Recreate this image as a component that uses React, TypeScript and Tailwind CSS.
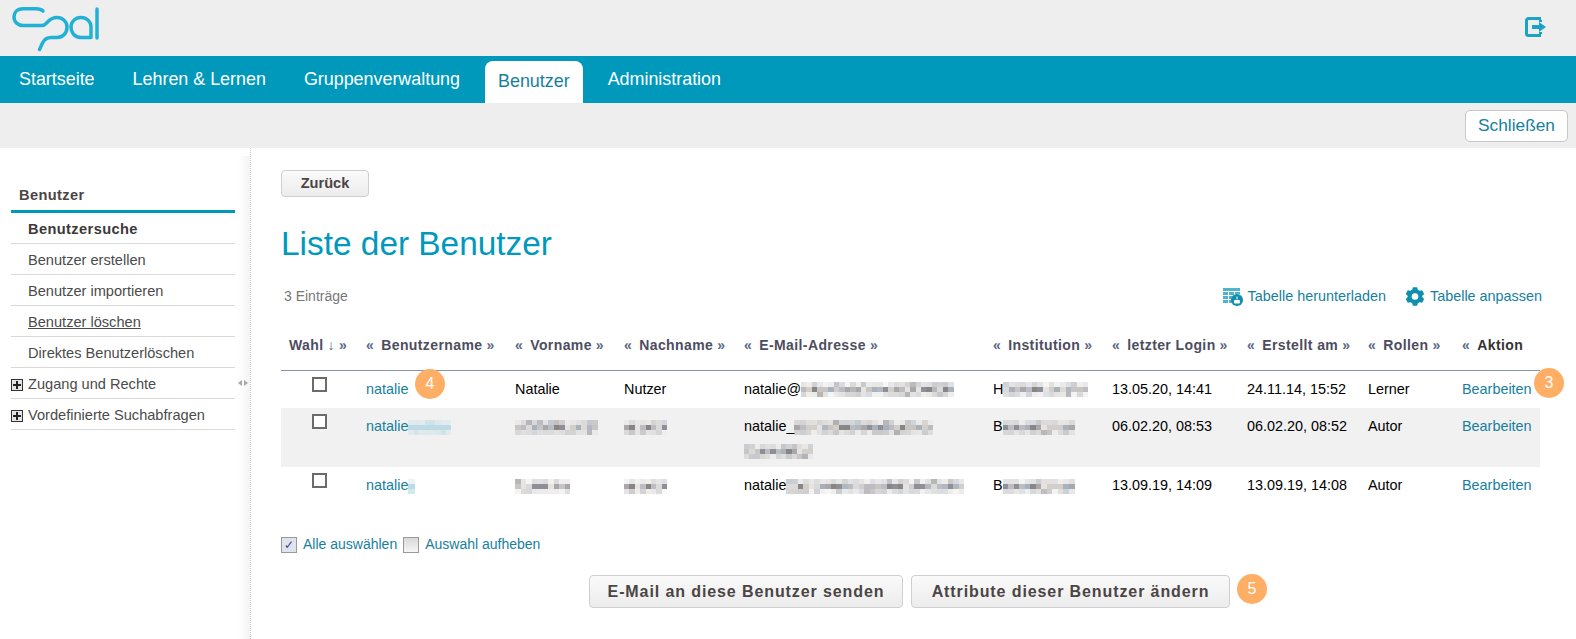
const blurColors = ["#c9c5c3", "#a9a7aa", "#dcdad8", "#8f8f9a", "#bdbcc0", "#e6e4e2", "#b3b8be", "#d2cfca", "#8a8585", "#a8b2bc"];

// cheap seeded noise so the mosaic doesn't look striped
function noise(n: number) {
  const x = Math.sin(n * 12.9898) * 43758.5453;
  return x - Math.floor(x);
}

// pixelated stand-in for anonymised text
function Blur({ w, tint }: { w: number; tint?: string }) {
  const cols = Math.max(1, Math.round(w / 5.5));
  return (
    <span className="inline-grid align-middle grid-rows-3" style={{ gridTemplateColumns: `repeat(${cols}, ${w / cols}px)` }}>
      {Array.from({ length: cols * 3 }).map((_, i) => {
        const mid = i >= cols && i < cols * 2;
        const r = noise(i + w);
        return (
          <span
            key={i}
            className="h-[5px]"
            style={{
              background: tint ?? blurColors[Math.floor(r * blurColors.length)],
              opacity: mid ? 1 : 0.25 + noise(i * 3 + w) * 0.4,
            }}
          />
        );
      })}
    </span>
  );
}

function Badge({ n, className }: { n: number; className: string }) {
  return (
    <span className={`absolute flex h-[30px] w-[30px] items-center justify-center rounded-full bg-[#ffae66] text-[16px] text-white ${className}`}>
      {n}
    </span>
  );
}

function Logo() {
  return (
    <svg width="110" height="55" viewBox="0 0 110 55" fill="none" stroke="#22b1d6" strokeWidth="3.5" strokeLinecap="round">
      <path d="M43 11 C41 9 39 8.8 36 8.8 H23 C17 8.8 14 12.5 14 17 C14 22 18 25.5 23 25.5 H42 C45 25.5 46 23.5 48 21.5 C50.5 19 53 17.5 57 17.5 C63 17.5 67 22 67 27 C67 33 63 37.5 57 37.5 H51 C46 37.5 44 40 42.5 43 L39.5 49.5" />
      <path d="M91 37.5 H81 C74 37.5 71 32 71 27 C71 22 75 17.5 81 17.5 C87 17.5 91 22 91 27 V37.5" />
      <path d="M97 9 V38" />
    </svg>
  );
}

function LogoutIcon() {
  return (
    <svg width="21" height="20" viewBox="0 0 21 20" className="mr-[30px] mt-[17px]" fill="none">
      <path d="M16 1.5H3.5a2 2 0 0 0-2 2v13a2 2 0 0 0 2 2H16" stroke="#1ba3c6" strokeWidth="3" />
      <path d="M15.5 3v2M15.5 15v2" stroke="#1ba3c6" strokeWidth="3" />
      <path d="M7 8h7V5l7 5-7 5v-3H7z" fill="#1ba3c6" />
    </svg>
  );
}

const sideItems = [
  { label: "Benutzersuche", cls: "font-bold tracking-[0.4px] text-[#3d3838]" },
  { label: "Benutzer erstellen", cls: "" },
  { label: "Benutzer importieren", cls: "" },
  { label: "Benutzer löschen", cls: "underline" },
  { label: "Direktes Benutzerlöschen", cls: "" },
];

const headers = [
  { label: "Wahl", left: false },
  { label: "Benutzername", left: true },
  { label: "Vorname", left: true },
  { label: "Nachname", left: true },
  { label: "E-Mail-Adresse", left: true },
  { label: "Institution", left: true },
  { label: "letzter Login", left: true },
  { label: "Erstellt am", left: true },
  { label: "Rollen", left: true },
];

const colWidths = [77, 149, 109, 120, 249, 119, 135, 121, 94, 86];

function Check() {
  return <span className="mx-auto block h-[15px] w-[15px] border-2 border-[#6b6b6b] bg-white" />;
}

function Row({ user, userBlur, first, last, mail, mailBlur, mail2, inst, instBlur, login, created, role, gray, h }: {
  user: string; userBlur: number; first: React.ReactNode; last: React.ReactNode; mail: string; mailBlur: number; mail2?: number;
  inst: string; instBlur: number; login: string; created: string; role: string; gray?: boolean; h: string;
}) {
  return (
    <tr className={`align-top text-[14.4px] leading-[23px] text-black ${h} ${gray ? "bg-[#f1f1f1]" : ""}`}>
      <td className="pt-[6px]"><Check /></td>
      <td className="pl-[8px] pt-[7px] text-[#177f9c]">{user}{userBlur > 0 && <Blur w={userBlur} tint="#bcdbe4" />}</td>
      <td className="pl-[8px] pt-[7px]">{first}</td>
      <td className="pl-[8px] pt-[7px]">{last}</td>
      <td className="pl-[8px] pt-[7px]">
        {mail}<Blur w={mailBlur} />
        {mail2 ? <div className="mt-[1px]"><Blur w={mail2} /></div> : null}
      </td>
      <td className="pl-[8px] pt-[7px]">{inst}<Blur w={instBlur} /></td>
      <td className="pl-[8px] pt-[7px]">{login}</td>
      <td className="pl-[8px] pt-[7px]">{created}</td>
      <td className="pl-[8px] pt-[7px]">{role}</td>
      <td className="pl-[8px] pt-[7px] text-[#177f9c]">Bearbeiten</td>
    </tr>
  );
}

export default function App() {
  return (
    <div className="h-[639px] w-[1576px] overflow-hidden bg-white font-['Liberation_Sans',Arial,sans-serif] text-[14.6px] text-[#4b4b4b]">
      <header className="flex h-[56px] items-start justify-between bg-[#eeeeee]">
        <Logo />
        <LogoutIcon />
      </header>

      <nav className="flex h-[47px] items-end bg-[#0099bc] text-[17.9px]">
        <a className="flex h-[47px] items-center px-[19px] text-white">Startseite</a>
        <a className="flex h-[47px] items-center px-[19px] text-white">Lehren &amp; Lernen</a>
        <a className="flex h-[47px] items-center px-[19px] text-white">Gruppenverwaltung</a>
        <a className="mx-[6px] flex h-[42px] items-center rounded-t-[8px] bg-white px-[13px] pb-[2px] text-[#177f9c]">Benutzer</a>
        <a className="flex h-[47px] items-center px-[19px] text-white">Administration</a>
      </nav>

      <div className="flex h-[45px] items-start justify-end bg-[#eeeeee] pr-[8px] pt-[7px]">
        <button className="h-[32px] w-[103px] rounded-[5px] border border-[#c8c8c8] bg-white text-[17.3px] text-[#177f9c]">Schließen</button>
      </div>

      <div className="flex">
        <aside className="relative h-[491px] w-[251px] shrink-0 border-r border-dotted border-[#cccccc] pl-[11px]">
          <div className="absolute right-0 top-[8px] h-full w-[12px] bg-gradient-to-r from-white to-[#f3f3f3]" />
          <svg width="10" height="6" viewBox="0 0 10 6" className="absolute left-[238px] top-[232px]" fill="#a8a8a8">
            <path d="M4 0v6L0 3zM6 0v6l4-3z" />
          </svg>
          <div className="w-[224px] pt-[37px]">
            <div className="h-[28px] border-b-[3px] border-[#0099bc] pl-[8px] font-bold leading-[20px] tracking-[0.4px] text-[#4b4545]">Benutzer</div>
            {sideItems.map((it) => (
              <div key={it.label} className="flex h-[31px] items-center border-b border-[#d9d9d9] pl-[17px] pt-[3px]">
                <span className={it.cls}>{it.label}</span>
              </div>
            ))}
            {["Zugang und Rechte", "Vordefinierte Suchabfragen"].map((l) => (
              <div key={l} className="flex h-[31px] items-center gap-[5px] border-b border-[#d9d9d9] pt-[3px]">
                <span className="relative h-[12px] w-[12px] border border-[#333] bg-[#e4e4e4]">
                  <span className="absolute left-[1px] top-[4px] h-[2px] w-[8px] bg-[#222]" />
                  <span className="absolute left-[4px] top-[1px] h-[8px] w-[2px] bg-[#222]" />
                </span>
                {l}
              </div>
            ))}
          </div>
        </aside>

        <main className="relative flex-1 pl-[30px] pt-[22px]">
          <button className="block h-[27px] w-[88px] rounded-[4px] border border-[#cfcfcf] bg-gradient-to-b from-[#fafafa] to-[#ececec] font-bold text-[#4b4545]">Zurück</button>
          <h1 className="mt-[25px] text-[33.4px] leading-[44px] text-[#0099bc]">Liste der Benutzer</h1>

          <div className="mr-[34px] mt-[20px] flex h-[21px] items-center justify-between">
            <span className="pl-[3px] text-[14px] text-[#777]">3 Einträge</span>
            <div className="flex items-center gap-[19px] text-[14.4px] text-[#177f9c]">
              <span className="flex items-center gap-[5px]">
                <svg width="20" height="18" viewBox="0 0 20 18">
                  <path d="M0 0h17v3H0zM0 4h5v3H0zM6 4h5v3H6zM12 4h5v2h-5zM0 8h5v3H0zM6 8h3.5v3H6zM0 12h5v3H0zM6 12h3v3H6z" fill="#4fb3cc" />
                  <circle cx="14" cy="12" r="6" fill="#0f8fb0" />
                  <path d="M14 8.5v3M11.5 12.5h5v2.5h-5z" fill="#fff" stroke="#fff" strokeWidth="1" />
                </svg>
                Tabelle herunterladen
              </span>
              <span className="flex items-center gap-[5px]">
                <svg width="20" height="21" viewBox="0 0 24 24" fill="#0f8fb0">
                  <path fillRule="evenodd" d="M9.5 1h5l.9 3 2.2 1.2 3-.7 2.4 4.4-2.2 2.2v1.8l2.2 2.2-2.4 4.4-3-.7-2.2 1.2-.9 3h-5l-.9-3-2.2-1.2-3 .7L.9 15.1l2.2-2.2v-1.8L.9 8.9l2.4-4.4 3 .7L8.6 4zM12 8a4 4 0 1 0 0 8 4 4 0 0 0 0-8z" />
                </svg>
                Tabelle anpassen
              </span>
            </div>
          </div>

          <table className="mt-[15px] w-[1259px] table-fixed border-collapse">
            <colgroup>
              {colWidths.map((w, i) => <col key={i} style={{ width: w }} />)}
            </colgroup>
            <thead>
              <tr className="h-[48px] border-b border-[#8795ab] text-[14px] tracking-[0.4px] text-[#4d4d60]">
                {headers.map((h) => (
                  <th key={h.label} className="pl-[8px] text-left font-bold whitespace-nowrap">
                    {h.left && <span className="mr-[7px] text-[#5b6a85]">«</span>}
                    {h.label}
                    {!h.left && <span className="ml-[4px] font-normal text-[#5b6a85]">↓</span>}
                    <span className="ml-[4px] text-[#5b6a85]">»</span>
                  </th>
                ))}
                <th className="pl-[8px] text-left font-bold whitespace-nowrap text-[#333]">
                  <span className="mr-[7px] text-[#5b6a85]">«</span>Aktion
                </th>
              </tr>
            </thead>
            <tbody>
              <Row h="h-[38px]" user="natalie" userBlur={0} first="Natalie" last="Nutzer" mail="natalie@" mailBlur={153} inst="H" instBlur={85} login="13.05.20, 14:41" created="24.11.14, 15:52" role="Lerner" />
              <Row h="h-[59px]" gray user="natalie" userBlur={43} first={<Blur w={83} />} last={<Blur w={43} />} mail="natalie_" mailBlur={139} mail2={69} inst="B" instBlur={72} login="06.02.20, 08:53" created="06.02.20, 08:52" role="Autor" />
              <Row h="h-[38px]" user="natalie" userBlur={7} first={<Blur w={55} />} last={<Blur w={43} />} mail="natalie" mailBlur={178} inst="B" instBlur={72} login="13.09.19, 14:09" created="13.09.19, 14:08" role="Autor" />
            </tbody>
          </table>

          <div className="mt-[29px] flex items-center text-[14px] text-[#177f9c]">
            <span className="mr-[6px] flex h-[16px] w-[16px] items-center justify-center border border-[#999] bg-[#dfe3ee] text-[12px] leading-none text-[#3b4a8c]">✓</span>
            Alle auswählen
            <span className="mx-[6px] h-[16px] w-[16px] border border-[#999] bg-gradient-to-b from-[#d8d8d8] to-[#f6f6f6]" />
            Auswahl aufheben
          </div>

          <div className="mt-[20px] flex gap-[8px] pl-[308px]">
            <button className="h-[33px] w-[314px] rounded-[4px] border border-[#cfcfcf] bg-gradient-to-b from-[#fafafa] to-[#ececec] text-[16px] font-bold tracking-[0.9px] text-[#4b4545]">E-Mail an diese Benutzer senden</button>
            <button className="h-[33px] w-[319px] rounded-[4px] border border-[#cfcfcf] bg-gradient-to-b from-[#fafafa] to-[#ececec] text-[16px] font-bold tracking-[0.9px] text-[#4b4545]">Attribute dieser Benutzer ändern</button>
          </div>

          <Badge n={4} className="left-[164px] top-[221px]" />
          <Badge n={3} className="left-[1283px] top-[220px]" />
          <Badge n={5} className="left-[986px] top-[426px]" />
        </main>
      </div>
    </div>
  );
}
